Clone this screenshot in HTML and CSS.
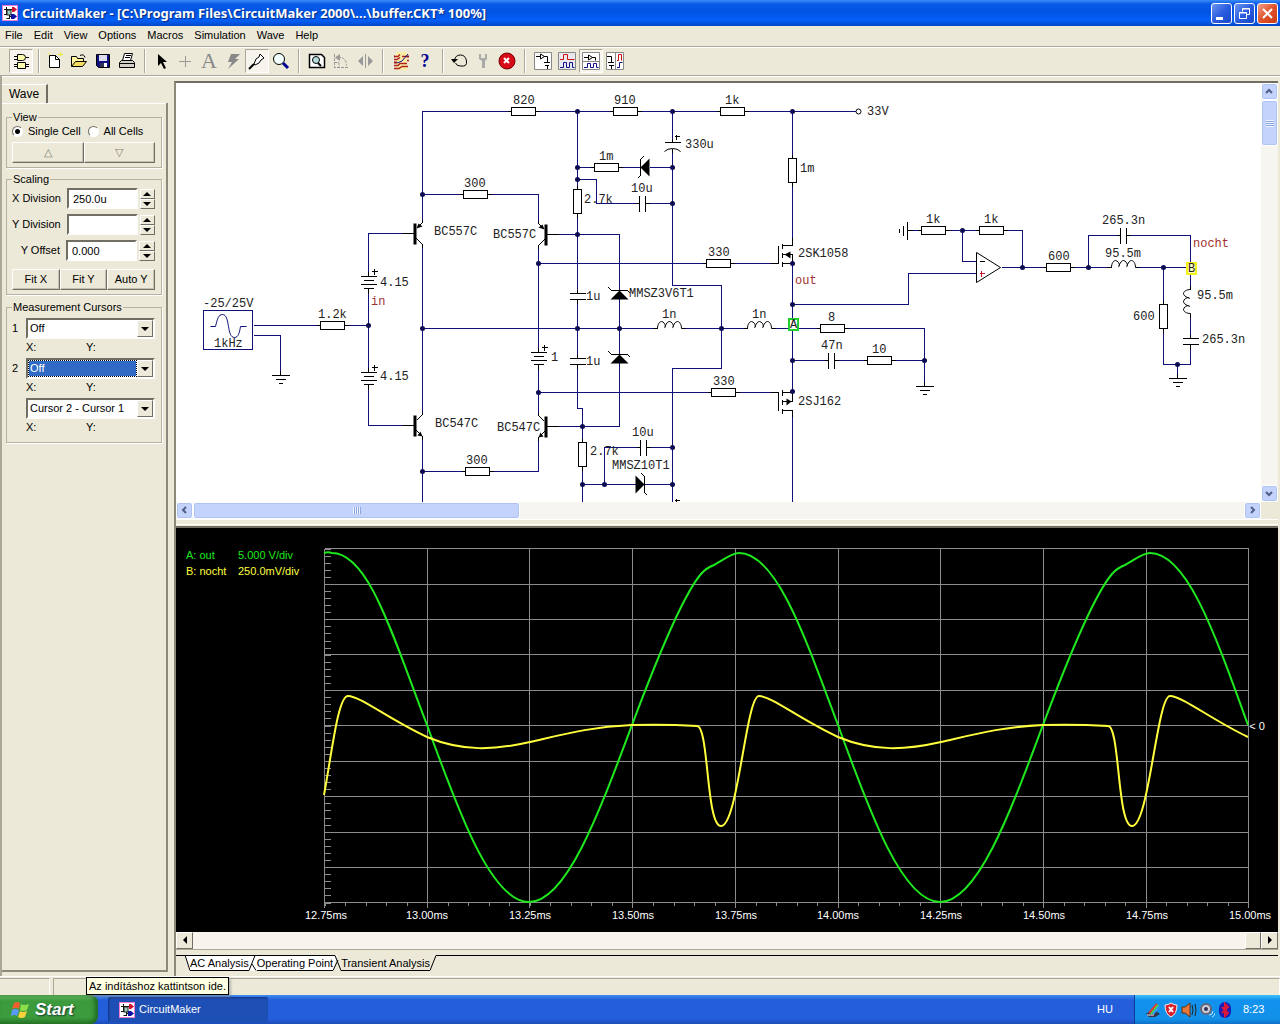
FILE: index.html
```html
<!DOCTYPE html>
<html lang="en">
<head>
    <meta charset="UTF-8">
    <meta name="viewport" content="width=device-width, initial-scale=1.0">
    <title>CircuitMaker - buffer.CKT</title>
    <link rel="stylesheet" href="styles.css">
</head>
<body>

    <svg class="defs" width="0" height="0" aria-hidden="true">
        <defs>
            <symbol id="logo" viewBox="0 0 16 16">
                <rect x=".5" y=".5" width="15" height="15" fill="#fff" stroke="#f07ad0" />
                <path d="M2 4.500H11M4.500 2V9M2 9.500H5M7.500 11.500H10M7.500 5V13.500M4.500 13.500H8" stroke="#111" fill="none" />
                <rect x="5" y="5" width="4" height="5" fill="#9fd0c0" stroke="#222" />
                <path d="M10 2h2l3 2.500-3 2.500h-2z" fill="#d01030" />
                <path d="M9 9h3l3 2.500-3 2.500h-3z" fill="#1010a0" />
            </symbol>
            <g id="res">
                <path d="M-16 0H16" class="part" />
                <rect x="-12" y="-4" width="24" height="8" class="part body" />
            </g>
            <g id="cap">
                <path d="M-7 0H-3M3 0H7M-3 -8V8M3 -8V8" class="part" />
            </g>
            <g id="coil">
                <path d="M-4 0H0C0 -4 2 -7 4 -7S8 -4 8 -2C7 0 7 -1 8 -3S10 -7 12 -7S16 -4 16 -2C15 0 15 -1 16 -3S18 -7 20 -7S24 -4 24 0H28" class="part curve" />
            </g>
            <g id="gnd">
                <path d="M0 -5V0M-9 0H9M-5 4H5M-2 8H2" class="part" />
            </g>
            <g id="bat">
                <path d="M0 -5V0M-8 0H8M-5 4H5M-8 8H8M-5 12H5M0 12V17M3 -5H9M6 -8V-2" class="part" />
            </g>
            <g id="zener">
                <path d="M-11 -3L-8 0H8L11 3" class="part" />
                <path d="M0 0L-9 9H9Z" class="solid" />
            </g>
            <g id="pnp">
                <path d="M-12 0H0M2 -5L8 -11V-14M2 5L8 11V14" class="part" />
                <rect x="-1" y="-10" width="3" height="21" class="solid" />
                <path d="M2 -5L4 -10L8 -7Z" class="solid" />
            </g>
            <g id="npn">
                <path d="M-12 0H0M2 -5L8 -11V-14M2 5L8 11V14" class="part" />
                <rect x="-1" y="-10" width="3" height="21" class="solid" />
                <path d="M8 11L3 10L6 6Z" class="solid" />
            </g>
        </defs>
    </svg>

    <header class="titlebar">
        <svg class="app-icon"><use href="#logo" /></svg>
        <h1>CircuitMaker - [C:\Program Files\CircuitMaker 2000\...\buffer.CKT* 100%]</h1>
        <div class="window-buttons">
            <button aria-label="Minimize"><svg width="19" height="19"><path d="M4 13h7v3H4z" fill="#fff" /></svg></button>
            <button aria-label="Restore"><svg width="19" height="19" fill="none" stroke="#fff"><path d="M7.500 7.500V4.500H14.500V10.500H12M7 5h8M4.500 8.500h7v6h-7zM4 9h8" /></svg></button>
            <button class="close" aria-label="Close"><svg width="19" height="19"><path d="M5 5L14 14M14 5L5 14" stroke="#fff" stroke-width="2" /></svg></button>
        </div>
    </header>

    <nav class="menubar">
        <a href="#">File</a>
        <a href="#">Edit</a>
        <a href="#">View</a>
        <a href="#">Options</a>
        <a href="#">Macros</a>
        <a href="#">Simulation</a>
        <a href="#">Wave</a>
        <a href="#">Help</a>
    </nav>

    <div class="toolbar">
        <button class="pressed" aria-label="Parts"><svg viewBox="0 0 20 20"><path d="M6.500 3.500h5q3 0 3 3t-3 3h-5zM6.500 11.500h8v6h-8z" fill="#ffffb0" stroke="#000" /><path d="M3 5.500h3M3 8.500h3M15 6.500h3M3 13.500h3M3 15.500h3M15 13.500h3M15 15.500h3" stroke="#000" /></svg></button>
        <span class="sep"></span>
        <button aria-label="New"><svg viewBox="0 0 20 20"><path d="M4.500 4.500h6l4 4v8h-10z" fill="#fff" stroke="#000" /><path d="M10.500 4v4.500h4" fill="none" stroke="#000" /><path d="M15.500 1v4M13 3.500h5M3 2l2 2" stroke="#eee83a" /></svg></button>
        <button aria-label="Open"><svg viewBox="0 0 20 20"><path d="M2.500 15.500V5.500h5l1 2h6v3" fill="#fff4a0" stroke="#000" /><path d="M2.500 15.500l4-5h11l-4 5z" fill="#f4dc60" stroke="#000" /><path d="M11 4.500q4-2 5 2" fill="none" stroke="#000" /></svg></button>
        <button aria-label="Save"><svg viewBox="0 0 20 20"><path d="M3.500 3.500h13v13h-11l-2-2z" fill="#101080" stroke="#000" /><path d="M6 4h8v6H6z" fill="#dde" /><path d="M7 12h7v4H7z" fill="#335" /><path d="M11 12h3v4h-3z" fill="#fff" /></svg></button>
        <button aria-label="Print"><svg viewBox="0 0 20 20"><path d="M5.500 9.500l2-7h8l-2 7" fill="#fff" stroke="#000" /><path d="M2.500 11.500l2-2h11l2 2v5h-15z" fill="#d4d0c8" stroke="#000" /><path d="M2 12.500h16M9 4.500h5M8 6.500h5" stroke="#000" /></svg></button>
        <span class="sep"></span>
        <button aria-label="Arrow"><svg viewBox="0 0 20 20"><path d="M7 3v12l3-3 3 6 2-1-3-6h4z" fill="#000" /></svg></button>
        <button aria-label="Wire"><svg viewBox="0 0 20 20"><path d="M4 10.500h12M10.500 5v11" stroke="#999" /></svg></button>
        <button class="letter" aria-label="Text">A</button>
        <button aria-label="Delete"><svg viewBox="0 0 20 20"><path d="M8 3h9l-5 5h4L5 18l4-7H5z" fill="#888" /></svg></button>
        <button class="pressed" aria-label="Probe"><svg viewBox="0 0 20 20"><path d="M2 18l5-5" stroke="#000" stroke-width="2" /><path d="M7 13L9 8L12 6L13 3L17 7L14 9L12 12L8 14Z" fill="#fff" stroke="#000" /></svg></button>
        <button aria-label="Zoom"><svg viewBox="0 0 20 20"><circle cx="8" cy="8" r="5.500" fill="#f4ffff" stroke="#000" /><path d="M12 12l5 5" stroke="#000090" stroke-width="3" /></svg></button>
        <span class="sep wide"></span>
        <button aria-label="Fit"><svg viewBox="0 0 20 20"><path d="M2.500 3.500h12l3 3v10h-15z" fill="#fff" stroke="#000" stroke-width="1.500" /><circle cx="9" cy="9" r="3.500" fill="#b8dcdc" stroke="#000" /><path d="M11 12l3 3" stroke="#000" stroke-width="2" /></svg></button>
        <button aria-label="Rotate"><svg viewBox="0 0 20 20"><path d="M3.500 3v13.500H17M3.500 11.500h4.500v5M7 6.500h3q5 1 5.500 8" fill="none" stroke="#999" stroke-dasharray="3 1" /><path d="M4 6.500L9 3V10Z" fill="#999" /></svg></button>
        <button aria-label="Mirror"><svg viewBox="0 0 20 20"><path d="M8 5v10l-5-5zM13 5v10l5-5z" fill="#999" /><path d="M10.500 3v14" stroke="#999" /></svg></button>
        <span class="sep wide"></span>
        <button aria-label="Netlist"><svg viewBox="0 0 20 20"><rect x="5" y="1" width="11" height="18" fill="#fbeea4" /><path d="M3 5.500h4l2-2M3 8.500h3l3-2M11 5.500h5M3 14.500h4l2-2h7M3 17.500h5l3-2h6M16 9.500h2" stroke="#b02020" stroke-width="1.500" fill="none" /><path d="M6 12l5-2 6-7" stroke="#101090" fill="none" /><path d="M3 11.500h3M3 5.500h1M16 5.500h2" stroke="#a01818" stroke-width="2" /></svg></button>
        <button class="letter help" aria-label="Help">?</button>
        <span class="sep"></span>
        <button aria-label="Reset"><svg viewBox="0 0 20 20"><path d="M5.500 9q1-5 6-5t6 6-6 5q-4 0-5-3" fill="none" stroke="#000" /><path d="M2 8h7l-4 4z" fill="#000" /></svg></button>
        <button aria-label="Tools"><svg viewBox="0 0 20 20"><path d="M6 3v5l3 2v7h3v-7l2-2V3h-2v4H8V3z" fill="#aaa" /></svg></button>
        <button aria-label="Stop"><svg viewBox="0 0 20 20"><circle cx="10" cy="10" r="8" fill="#d80c18" stroke="#700" /><path d="M7 7l5 5M12 7l-5 5" stroke="#fff" stroke-width="2" /></svg></button>
        <span class="sep wide"></span>
        <button aria-label="Schematic"><svg viewBox="0 0 20 20"><path d="M1.500 1.500h17v17h-17z" fill="#fff" stroke="#888" /><path d="M3 5.500h4M11 5.500h3.500v6M11 11.500h6M12 14.500h4M14.500 15v3M7.500 3v5l4-2.500z" stroke="#000" fill="none" /></svg></button>
        <button aria-label="Waves"><svg viewBox="0 0 20 20"><path d="M1.500 1.500h17v17h-17z" fill="#e8e8ee" stroke="#888" /><path d="M3 8.500h3.500v-5h4v5h7" stroke="#d01010" fill="none" /><path d="M3 16.500h3.500v-5h3v5h3v-5h3v5h2" stroke="#101090" fill="none" /></svg></button>
        <button class="pressed" aria-label="Split horizontal"><svg viewBox="0 0 20 20"><path d="M1.500 1.500h17v17h-17zM1.500 10.500h17" fill="#fff" stroke="#888" /><path d="M3 6.500h4M11 6.500h3.500v3M7.500 4v5l4-2.500z" stroke="#000" fill="none" /><path d="M3 16.500h3.500v-4h3v4h3v-4h3v4h2" stroke="#101090" fill="none" /></svg></button>
        <button aria-label="Split vertical"><svg viewBox="0 0 20 20"><path d="M1.500 1.500h17v17h-17zM10.500 1.500v17" fill="#fff" stroke="#888" /><path d="M2 5.500h4.500v6M3 11.500h6M4 14.500h5M6.500 15v3" stroke="#000" fill="none" /><path d="M12 9.500h1.500v-6h3v6" stroke="#d01010" fill="none" /><path d="M12 16.500h2.500v-5h3" stroke="#101090" fill="none" /></svg></button>
    </div>

    <main class="workspace">
        <aside class="sidebar">
            <button class="side-tab">Wave</button>
            <form class="side-body">
                <fieldset>
                    <legend>View</legend>
                    <div class="radios">
                        <label><input type="radio" name="cells" checked>Single Cell</label>
                        <label><input type="radio" name="cells">All Cells</label>
                    </div>
                    <div class="button-row">
                        <button type="button" class="dim" aria-label="Previous cell">△</button>
                        <button type="button" class="dim" aria-label="Next cell">▽</button>
                    </div>
                </fieldset>

                <fieldset class="scaling">
                    <legend>Scaling</legend>
                    <div class="scale-row">
                        <label for="xdiv">X Division</label>
                        <input type="text" id="xdiv" value="250.0u">
                        <div class="spin"><button type="button" aria-label="X division up"></button><button type="button" class="down" aria-label="X division down"></button></div>
                    </div>
                    <div class="scale-row">
                        <label for="ydiv">Y Division</label>
                        <input type="text" id="ydiv" value="">
                        <div class="spin"><button type="button" aria-label="Y division up"></button><button type="button" class="down" aria-label="Y division down"></button></div>
                    </div>
                    <div class="scale-row">
                        <label for="yoff">Y Offset</label>
                        <input type="text" id="yoff" value="0.000">
                        <div class="spin"><button type="button" aria-label="Y offset up"></button><button type="button" class="down" aria-label="Y offset down"></button></div>
                    </div>
                    <div class="button-row fit">
                        <button type="button">Fit X</button>
                        <button type="button">Fit Y</button>
                        <button type="button">Auto Y</button>
                    </div>
                </fieldset>

                <fieldset class="cursors">
                    <legend>Measurement Cursors</legend>
                    <label for="c1">1</label>
                    <div class="combo"><select id="c1"><option>Off</option></select><i></i></div>
                    <p><span>X:</span><span>Y:</span></p>
                    <label for="c2">2</label>
                    <div class="combo active"><select id="c2"><option>Off</option></select><i></i></div>
                    <p><span>X:</span><span>Y:</span></p>
                    <div class="combo"><select aria-label="Cursor difference"><option>Cursor 2 - Cursor 1</option></select><i></i></div>
                    <p><span>X:</span><span>Y:</span></p>
                </fieldset>
            </form>
        </aside>

        <section class="panes">
            <div class="schematic">
                <svg class="canvas" viewBox="176 83 1085 419" preserveAspectRatio="xMinYMin slice">
                    <!-- wires -->
                    <g class="wires" transform="translate(.5 .5)">
                        <path d="M422 222V111H855M422 194H538V222M422 245V412M422 436V502M422 471H538V440" />
                        <path d="M413 233H368V276M368 288V372M368 384V425H413M253 325H368M253 335H280V375" />
                        <path d="M577 111V293M577 299V358M577 364V408H582V502M577 167H641M649 167H672" />
                        <path d="M672 111V142M672 148V285H721V368H672V502" />
                        <path d="M577 179H596V203H639M645 203H672M549 234H619V426H549" />
                        <path d="M538 246V352M538 364V414M538 263H775M538 392H775" />
                        <path d="M422 328H657M681 328H747M771 328H924V386" />
                        <path d="M640 447H604V484M646 447H672M582 484H672" />
                        <path d="M792 111V245M792 263V390M792 412V502M792 360H828M834 360H924" />
                        <path d="M792 304H908V273H976M911 230H1022V267M962 230V261H976M1001 267H1111M1135 267H1190" />
                        <path d="M1088 267V235H1120M1126 235H1190V289M1190 313V338M1190 344V364H1163V267M1177 364V378" />
                        <rect x="203" y="310" width="49" height="39" />
                        <path class="curve" d="M210 326H215C217 318 218 314 222 314S227 320 228 326S230 337 234 337S239 332 240 326H246" />
                    </g>
                    <!-- parts -->
                    <g transform="translate(.5 .5)">
                        <use href="#res" x="523" y="111" />
                        <use href="#res" x="625" y="111" />
                        <use href="#res" x="732" y="111" />
                        <use href="#res" x="606" y="167" />
                        <use href="#res" x="475" y="194" />
                        <use href="#res" x="718" y="263" />
                        <use href="#res" x="332" y="325" />
                        <use href="#res" x="477" y="471" />
                        <use href="#res" x="723" y="392" />
                        <use href="#res" x="832" y="328" />
                        <use href="#res" x="879" y="360" />
                        <use href="#res" x="933" y="230" />
                        <use href="#res" x="991" y="230" />
                        <use href="#res" x="1058" y="267" />
                        <use href="#res" transform="translate(577 201) rotate(90)" />
                        <use href="#res" transform="translate(582 454) rotate(90)" />
                        <use href="#res" transform="translate(792 170) rotate(90)" />
                        <use href="#res" transform="translate(1163 316) rotate(90)" />
                        <use href="#cap" x="642" y="203" />
                        <use href="#cap" x="643" y="447" />
                        <use href="#cap" x="831" y="360" />
                        <use href="#cap" x="1123" y="235" />
                        <use href="#cap" transform="translate(577 296) rotate(90)" />
                        <use href="#cap" transform="translate(577 361) rotate(90)" />
                        <use href="#cap" transform="translate(1190 341) rotate(90)" />
                        <path class="part" d="M672 138V142M664 142H680M672 148V152M674 136H679M676 134V139M674 500H679M676 498V502" />
                        <path class="part curve" d="M664 151Q667 148 672 148T680 151" />
                        <use href="#coil" x="657" y="328" />
                        <use href="#coil" x="747" y="328" />
                        <use href="#coil" x="1111" y="267" />
                        <use href="#coil" transform="translate(1190 313) rotate(-90)" />
                        <use href="#gnd" x="280" y="375" />
                        <use href="#gnd" x="924" y="386" />
                        <use href="#gnd" x="1177" y="378" />
                        <use href="#gnd" transform="translate(907 230) rotate(90)" />
                        <use href="#bat" x="368" y="276" />
                        <use href="#bat" x="368" y="372" />
                        <use href="#bat" x="538" y="352" />
                        <use href="#zener" x="619" y="290" />
                        <use href="#zener" x="619" y="354" />
                        <use href="#zener" transform="translate(640 167) rotate(-90)" />
                        <use href="#zener" transform="translate(644 484) scale(-1 1) rotate(-90)" />
                        <use href="#pnp" x="414" y="233" />
                        <use href="#npn" x="414" y="425" />
                        <use href="#pnp" transform="translate(546 234) scale(-1 1)" />
                        <use href="#npn" transform="translate(546 426) scale(-1 1)" />
                        <!-- mosfets -->
                        <path class="part" d="M770 263H778V245M782 243V248M782 252V257M782 261V266M782 245H792V237M782 254H792V263H782" />
                        <path class="solid" d="M784 254L790 251V258Z" />
                        <path class="part" d="M770 392H778V410M782 389V395M782 399V404M782 408V413M782 392H792V401H782M782 410H792V416" />
                        <path class="solid" d="M791 401L786 398V405Z" />
                        <!-- op amp -->
                        <path class="part curve" d="M976 252L1000 267L976 282Z" />
                        <path class="part" d="M979 261H984" />
                        <path class="plus" d="M979 273H984M981 270V276" />
                        <circle class="terminal" cx="858" cy="111" r="2.500" />
                    </g>
                    <g class="dots" transform="translate(.5 .5)">
                        <path d="M577 111h0M672 111h0M792 111h0M577 167h0M577 179h0M672 167h0M672 203h0M577 234h0M538 263h0M422 194h0M368 325h0M422 328h0M422 471h0M577 328h0M619 328h0M721 328h0M538 392h0M582 426h0M582 484h0M604 484h0M672 447h0M672 484h0M792 304h0M792 360h0M924 360h0M962 230h0M1022 267h0M1088 267h0M1163 267h0M1177 364h0M792 263h0M792 391h0" />
                    </g>
                    <g class="labels">
                        <text x="513" y="104">820</text>
                        <text x="614" y="104">910</text>
                        <text x="725" y="104">1k</text>
                        <text x="867" y="115">33V</text>
                        <text x="685" y="148">330u</text>
                        <text x="599" y="160">1m</text>
                        <text x="631" y="192">10u</text>
                        <text x="584" y="203">2.7k</text>
                        <text x="464" y="187">300</text>
                        <text x="434" y="235">BC557C</text>
                        <text x="493" y="238">BC557C</text>
                        <text x="708" y="256">330</text>
                        <text x="800" y="172">1m</text>
                        <text x="798" y="257">2SK1058</text>
                        <text x="629" y="297">MMSZ3V6T1</text>
                        <text x="586" y="300">1u</text>
                        <text x="586" y="365">1u</text>
                        <text x="662" y="318">1n</text>
                        <text x="752" y="318">1n</text>
                        <text x="551" y="361">1</text>
                        <text x="713" y="385">330</text>
                        <text x="435" y="427">BC547C</text>
                        <text x="497" y="431">BC547C</text>
                        <text x="632" y="436">10u</text>
                        <text x="590" y="455">2.7k</text>
                        <text x="612" y="469">MMSZ10T1</text>
                        <text x="466" y="464">300</text>
                        <text x="380" y="286">4.15</text>
                        <text x="380" y="380">4.15</text>
                        <text x="318" y="318">1.2k</text>
                        <text x="203" y="307">-25/25V</text>
                        <text x="214" y="347">1kHz</text>
                        <text x="798" y="405">2SJ162</text>
                        <text x="828" y="321">8</text>
                        <text x="821" y="349">47n</text>
                        <text x="872" y="353">10</text>
                        <text x="926" y="223">1k</text>
                        <text x="984" y="223">1k</text>
                        <text x="1048" y="260">600</text>
                        <text x="1102" y="224">265.3n</text>
                        <text x="1105" y="257">95.5m</text>
                        <text x="1197" y="299">95.5m</text>
                        <text x="1133" y="320">600</text>
                        <text x="1202" y="343">265.3n</text>
                        <text class="net" x="1193" y="247">nocht</text>
                        <text class="net" x="371" y="305">in</text>
                        <text class="net" x="795" y="284">out</text>
                    </g>
                    <!-- probes -->
                    <rect x="789" y="319" width="9" height="11" fill="#fff" stroke="#1fd02f" stroke-width="2" />
                    <rect x="1187" y="263" width="9" height="11" fill="#ffffc0" stroke="#f4f01c" stroke-width="2" />
                    <g class="labels">
                        <text x="790" y="328">A</text>
                        <text x="1188" y="272">B</text>
                    </g>
                </svg>
                <div class="xp-scroll vertical">
                    <button aria-label="Scroll up"><svg width="9" height="9"><path d="M1 6L4 3L7 6" /></svg></button>
                    <div class="thumb"></div>
                    <button class="end" aria-label="Scroll down"><svg width="9" height="9"><path d="M1 3L4 6L7 3" /></svg></button>
                </div>
                <div class="xp-scroll horizontal">
                    <button aria-label="Scroll left"><svg width="9" height="9"><path d="M6 1L3 4L6 7" /></svg></button>
                    <div class="thumb"></div>
                    <button class="end" aria-label="Scroll right"><svg width="9" height="9"><path d="M3 1L6 4L3 7" /></svg></button>
                </div>
            </div>

            <div class="splitter"></div>

            <div class="plot">
                <svg viewBox="176 528 1102 404" preserveAspectRatio="xMinYMin meet">
                    <g class="grid" transform="translate(.5 .5)">
                        <path d="M324 548V907M427 548V907M529 548V907M632 548V907M735 548V907M838 548V907M940 548V907M1043 548V907M1146 548V907M1248 548V907" />
                        <path d="M324 548H1248M324 584H1248M324 619H1248M324 654H1248M324 690H1248M324 725H1248M324 761H1248M324 796H1248M324 832H1248M324 867H1248M324 902H1248" />
                        <path class="ticks-y" d="M327 548V903" />
                        <path class="ticks-x" d="M324 904H1249" />
                    </g>
                    <path class="trace-a" d="M324 553C327 552 329 552 332 553C369 553 393 637 427 725C460 816 492 902 529 902C566 902 598 816 632 725C656 661 683 595 701 574Q706 568 714 565C722 561 731 553 739 553C776 553 804 634 838 725C871 816 903 902 940 902C977 902 1009 816 1043 725C1067 661 1094 595 1112 574Q1117 568 1125 565C1133 561 1142 553 1150 553C1187 553 1215 634 1248 725" />
                    <path class="trace-b" d="M324 795C332 752 338 696 348 696C360 696 390 720 427 737C463 752 495 750 530 742C565 734 590 727 632 725Q665 724 697 726C709 726 706 826 721 826C738 826 746 696 759 696C771 696 801 720 838 737C874 752 906 750 941 742C976 734 1001 727 1043 725Q1076 724 1108 726C1120 726 1117 826 1132 826C1149 826 1157 696 1170 696C1182 696 1212 720 1248 737" />
                    <g class="axis">
                        <text x="326" y="919">12.75ms</text>
                        <text x="427" y="919">13.00ms</text>
                        <text x="530" y="919">13.25ms</text>
                        <text x="633" y="919">13.50ms</text>
                        <text x="736" y="919">13.75ms</text>
                        <text x="838" y="919">14.00ms</text>
                        <text x="941" y="919">14.25ms</text>
                        <text x="1044" y="919">14.50ms</text>
                        <text x="1147" y="919">14.75ms</text>
                        <text x="1250" y="919">15.00ms</text>
                        <text x="1257" y="730">&lt; 0</text>
                    </g>
                    <g class="legend-a">
                        <text x="186" y="559">A: out</text>
                        <text x="238" y="559">5.000 V/div</text>
                    </g>
                    <g class="legend-b">
                        <text x="186" y="575">B: nocht</text>
                        <text x="238" y="575">250.0mV/div</text>
                    </g>
                </svg>
            </div>

            <div class="classic-scroll">
                <button aria-label="Scroll left"><svg width="6" height="8"><path d="M5 0V8L1 4Z" /></svg></button>
                <span class="track"></span>
                <span class="grip"></span>
                <button aria-label="Scroll right"><svg width="6" height="8"><path d="M1 0V8L5 4Z" /></svg></button>
            </div>

            <div class="analysis-tabs">
                <span class="lead"></span>
                <svg width="5" height="16"><path d="M0 0H5V15Z" fill="#fff" stroke="none" /><path d="M0 .5H5M0 0L5 15.500" /></svg>
                <button>AC Analysis</button>
                <svg width="8" height="16"><path d="M0 0H8V16H0Z" fill="#fff" stroke="none" /><path d="M0 15.500L6 .5H0M6 .5H8M3 9L7 15.500" /></svg>
                <button>Operating Point</button>
                <svg width="8" height="16"><path d="M0 0H4L0 15Z" fill="#fff" stroke="none" /><path d="M0 15.500L5 5M0 .5H2L8 15.500" /></svg>
                <button class="current">Transient Analysis</button>
                <svg width="8" height="16"><path d="M0 15.500L6 .5H8" /></svg>
                <span class="rest"></span>
            </div>
        </section>
    </main>

    <div class="statusbar">
        <span class="cell"></span>
        <span class="cell grow"></span>
        <div class="tooltip" role="tooltip">Az indításhoz kattintson ide.</div>
    </div>

    <footer class="taskbar">
        <button class="start">
            <svg width="18" height="18" viewBox="0 0 18 18">
                <path d="M3 2Q6 0 9 2L8 8Q5 6 1 8Z" fill="#f0602c" />
                <path d="M10 3Q13 5 18 3L16 9Q12 11 9 9Z" fill="#8ee04a" />
                <path d="M1 9Q4 7 8 9L6 15Q3 13 0 15Z" fill="#5a9af8" />
                <path d="M9 10Q12 12 16 10L14 16Q10 18 7 16Z" fill="#fcd23c" />
            </svg>
            Start
        </button>
        <button class="task"><svg class="app-icon"><use href="#logo" /></svg>CircuitMaker</button>
        <span class="lang">HU</span>
        <div class="tray">
            <svg width="16" height="16"><path d="M1 12L8 7L15 12L10 15H4Z" fill="#334" /><path d="M4 11L12 2" stroke="#e33" stroke-width="2" /><path d="M6 12L13 3" stroke="#4d4" stroke-width="2" /><path d="M8 12L14 5" stroke="#39f" stroke-width="2" /><path d="M2 13L9 13" stroke="#eee" /></svg>
            <svg width="16" height="16"><path d="M8 1Q11 3 14 3Q14 12 8 15Q2 12 2 3Q5 3 8 1Z" fill="#d8202c" stroke="#eee" /><path d="M6 5L10 10M10 5L6 10" stroke="#fff" stroke-width="2" /></svg>
            <svg width="16" height="16"><path d="M1 5H4L9 1V15L4 11H1Z" fill="#e8763a" stroke="#531" /><path d="M11 3Q13 8 11 13M14 2Q16 8 14 14" fill="none" stroke="#222" /></svg>
            <svg width="16" height="16"><circle cx="7" cy="7" r="5" fill="#ccd" stroke="#667" stroke-width="2" /><circle cx="7" cy="7" r="2" fill="#335" /><path d="M10 13Q14 13 14 9M13 15Q16 14 16 11" fill="none" stroke="#bde" /></svg>
            <svg width="16" height="16"><rect x="2" y="0" width="12" height="16" rx="6" fill="#1620b8" /><path d="M5 5L11 11L8 14V2L11 5L5 11" fill="none" stroke="#e01838" stroke-width="2" /></svg>
            <time>8:23</time>
        </div>
    </footer>

</body>
</html>
```
FILE: styles.css
```css
* {
    box-sizing: border-box;
}
body {
    margin: 0;
    min-height: 100vh;
    display: flex;
    flex-direction: column;
    background: #ece9d8;
    color: #000;
    font: 11px/13px "Liberation Sans", Arial, sans-serif;
}
button, input, select {
    font: inherit;
    color: inherit;
    margin: 0;
    padding: 0;
    border: 0;
    border-radius: 0;
    background: none;
}
.defs {
    position: absolute;
}
.app-icon {
    width: 16px;
    height: 16px;
    flex: none;
}

/* Title bar */
.titlebar {
    display: flex;
    align-items: center;
    height: 26px;
    padding: 0 2px;
    background: linear-gradient(#3a8cf8, #0a5ae8 4px, #0054e3 12px, #0560f8 20px, #0048c8);
    color: #fff;
}
.titlebar h1 {
    flex: 1;
    margin: 0 0 0 4px;
    font: bold 13px/18px "Noto Sans", "Open Sans", sans-serif;
    text-shadow: 1px 1px 1px #0a2a80;
    white-space: nowrap;
}
.window-buttons {
    display: flex;
    gap: 2px;
}
.window-buttons button {
    width: 21px;
    height: 21px;
    border: 1px solid #fff;
    border-radius: 3px;
    background: linear-gradient(135deg, #6d96f0, #2a5ce0 50%, #1a48c8);
}
.window-buttons svg {
    display: block;
}
.window-buttons .close {
    background: linear-gradient(135deg, #f0a088, #e0532c 50%, #c83c14);
}

/* Menu and toolbar */
.menubar {
    display: flex;
    height: 20px;
}
.menubar a {
    padding: 3px 6px 3px 5px;
    color: #000;
    text-decoration: none;
}
.toolbar {
    display: flex;
    align-items: center;
    height: 30px;
    padding-left: 9px;
    border-top: 1px solid #aca899;
    border-bottom: 1px solid #aca899;
    box-shadow: inset 0 1px #fff, 0 1px #fff;
}
.toolbar button {
    display: flex;
    align-items: center;
    justify-content: center;
    width: 24px;
    height: 24px;
}
.toolbar svg {
    flex: none;
    width: 20px;
    height: 20px;
}
.toolbar .pressed {
    border: 1px solid;
    border-color: #aca899 #fff #fff #aca899;
    background: #f6f4ec;
}
.toolbar .letter {
    font: 22px/24px "Liberation Serif", serif;
    color: #888;
}
.toolbar .help {
    font-size: 18px;
    font-weight: bold;
    color: #000090;
}
.sep {
    width: 2px;
    height: 24px;
    margin: 0 3px 0 5px;
    border-left: 1px solid #aca899;
    border-right: 1px solid #fff;
}
.sep.wide {
    margin: 0 5px;
}

/* Workspace */
.workspace {
    flex: 1;
    display: flex;
    min-height: 0;
}
.sidebar {
    width: 168px;
    flex: none;
    display: flex;
    flex-direction: column;
    align-items: flex-start;
    padding-top: 8px;
    border-left: 2px solid #aca899;
}
.side-tab {
    height: 19px;
    width: 46px;
    border-top: 1px solid #fff;
    border-right: 2px solid #716f64;
    font-size: 12px;
}
.side-body {
    flex: 1;
    width: 100%;
    margin-bottom: 4px;
    padding: 8px 4px 0;
    border-right: 2px solid #8d8a7c;
    border-bottom: 2px solid #8d8a7c;
    box-shadow: inset 0 1px #fff;
}
fieldset {
    margin: 0 0 5px;
    padding: 0 6px 4px 5px;
    min-width: 0;
    border: 1px solid #b5b2a2;
    box-shadow: 1px 1px #fff;
}
legend {
    height: 13px;
    padding: 0 1px;
}
.radios {
    display: flex;
    gap: 7px;
    height: 18px;
    white-space: nowrap;
}
.radios label {
    display: flex;
    align-items: center;
    height: 14px;
}
.radios input {
    appearance: none;
    width: 11px;
    height: 11px;
    margin-right: 5px;
    border: 1px solid;
    border-color: #716f64 #fff #fff #716f64;
    border-radius: 50%;
    background: #fff;
}
.radios input:checked {
    background: radial-gradient(#000 2px, #fff 3px);
}
.button-row {
    display: flex;
}
.button-row button {
    flex: 1;
    height: 21px;
    border: 1px solid;
    border-color: #fff #716f64 #716f64 #fff;
    box-shadow: inset -1px -1px #c5c2b4;
}
.button-row .dim {
    color: #807d70;
}
.scaling {
    padding-bottom: 4px;
    margin-bottom: 6px;
}
.scale-row {
    display: flex;
    align-items: center;
    height: 21px;
    margin: 0 0 5px;
}
.scale-row:nth-of-type(1) {
    margin-top: 2px;
}
.scale-row label {
    flex: 1;
    padding-right: 6px;
    text-align: right;
    white-space: nowrap;
}
.scale-row input {
    width: 71px;
    height: 21px;
    padding: 0 4px;
    border: 2px solid;
    border-color: #716f64 #fff #fff #716f64;
    background: #fff;
}
.spin {
    width: 16px;
    height: 20px;
    margin-left: 2px;
    display: flex;
    flex-direction: column;
}
.spin button {
    flex: 1;
    display: flex;
    align-items: center;
    justify-content: center;
    border: 1px solid;
    border-color: #fff #716f64 #716f64 #fff;
}
.spin button::before {
    content: "";
    border: 4px solid transparent;
    border-top: 0;
    border-bottom: 4px solid #000;
}
.spin .down::before {
    border-top: 4px solid #000;
    border-bottom: 0;
}
.fit {
    margin-top: 8px;
}
.cursors {
    display: grid;
    grid-template-columns: 14px 1fr;
    align-items: center;
    padding-top: 4px;
}
.cursors label {
    grid-column: 1;
}
.cursors .combo, .cursors p {
    grid-column: 2;
}
.cursors p {
    display: flex;
    height: 19px;
    margin: 0;
    padding-top: 2px;
}
.cursors p span {
    width: 60px;
}
.combo {
    display: flex;
    height: 21px;
    min-width: 0;
    border: 2px solid;
    border-color: #716f64 #fff #fff #716f64;
    background: #fff;
}
.combo select {
    appearance: none;
    flex: 1;
    min-width: 0;
    padding: 0 2px;
}
.combo.active select {
    margin: 1px;
    padding: 0 1px;
    background: #316ac5;
    color: #fff;
    outline: 1px dotted #000;
}
.combo i {
    width: 16px;
    display: flex;
    align-items: center;
    justify-content: center;
    border: 1px solid;
    border-color: #fff #716f64 #716f64 #fff;
    background: #ece9d8;
}
.combo i::before {
    content: "";
    border: 4px solid transparent;
    border-top-color: #000;
    border-bottom: 0;
}

/* Right side */
.panes {
    flex: 1;
    min-width: 0;
    display: flex;
    flex-direction: column;
    margin: 5px 2px 0 6px;
    border-left: 2px solid #8d8a7c;
    border-top: 2px solid #716f64;
}
.schematic {
    flex: 436 1 0;
    min-height: 0;
    display: grid;
    grid-template: minmax(0, 1fr) 17px / minmax(0, 1fr) 17px;
}
.canvas {
    display: block;
    width: 100%;
    height: 100%;
    background: #fff;
}
.wires, .part, .terminal, .plus {
    fill: none;
    stroke: #000;
    shape-rendering: crispEdges;
}
.wires {
    stroke: #10107a;
}
.body, .terminal {
    fill: #fff;
}
.curve, .terminal {
    shape-rendering: auto;
}
.plus {
    stroke: #d01020;
}
.dots {
    fill: none;
    stroke: #0c0c50;
    stroke-width: 5px;
    stroke-linecap: round;
}
.labels {
    font: 12px "Liberation Mono", monospace;
    fill: #222;
}
.labels .net {
    fill: #a03030;
}
.xp-scroll {
    display: flex;
    background: #f6f5f0;
}
.vertical {
    flex-direction: column;
}
.xp-scroll button, .thumb {
    border: 1px solid #fff;
    border-radius: 3px;
    background: #c3d3fc;
    box-shadow: inset 0 0 0 1px #b0c4f4;
}
.xp-scroll button {
    display: flex;
    align-items: center;
    justify-content: center;
    width: 17px;
    height: 17px;
}
.xp-scroll path {
    fill: none;
    stroke: #4d6185;
    stroke-width: 2;
}
.xp-scroll .end {
    margin: auto 0 0 auto;
}
.thumb {
    display: flex;
    align-items: center;
    justify-content: center;
}
.vertical .thumb {
    height: 46px;
}
.horizontal .thumb {
    width: 327px;
}
.thumb::before {
    content: "";
    width: 8px;
    height: 7px;
    background: repeating-linear-gradient(90deg, #eef4fe 0 1px, #8ca6e0 1px 2px);
}
.vertical .thumb::before {
    background: repeating-linear-gradient(#eef4fe 0 1px, #8ca6e0 1px 2px);
}
.splitter {
    height: 9px;
    border-top: 1px solid #fff;
    border-bottom: 2px solid #716f64;
    background: linear-gradient(#ece9d8 4px, #fff 4px, #fff 5px, #ece9d8 5px);
}
.plot {
    flex: 404 1 0;
    min-height: 0;
    background: #000;
}
.plot svg {
    display: block;
    width: 100%;
    height: 100%;
}
.grid {
    fill: none;
    stroke: #8c8c8c;
    shape-rendering: crispEdges;
}
.ticks-y {
    stroke-width: 6px;
    stroke-dasharray: 1 6.08;
}
.ticks-x {
    stroke-width: 3px;
    stroke-dasharray: 1 19.53;
}
.trace-a, .trace-b {
    fill: none;
    stroke: #1ee81e;
    stroke-width: 2px;
}
.trace-b {
    stroke: #ffff3c;
}
.axis {
    fill: #fff;
    text-anchor: middle;
}
.legend-a {
    fill: #1ee81e;
}
.legend-b {
    fill: #ffff3c;
}
.classic-scroll {
    display: flex;
    height: 18px;
    border-bottom: 1px solid #aca899;
}
.classic-scroll button, .grip {
    width: 17px;
    border: 1px solid;
    border-color: #fff #716f64 #716f64 #fff;
    background: #ece9d8;
}
.grip {
    width: 16px;
}
.track {
    flex: 1;
    background: #f6f4ec;
}
.analysis-tabs {
    display: flex;
    height: 21px;
    margin: 5px 0 0;
}
.analysis-tabs svg {
    flex: none;
    fill: none;
    stroke: #000;
}
.analysis-tabs button {
    height: 16px;
    border-top: 1px solid #000;
    border-bottom: 1px solid #000;
    background: #fff;
    line-height: 14px;
    white-space: nowrap;
}
.analysis-tabs .current {
    border-top-color: transparent;
    background: none;
}
.lead, .rest {
    width: 9px;
    border-top: 1px solid #000;
}
.rest {
    flex: 1;
}

/* Bottom */
.statusbar {
    position: relative;
    display: flex;
    gap: 3px;
    height: 19px;
    padding-top: 1px;
    border-top: 1px solid #fff;
}
.cell {
    width: 50px;
    border-top: 1px solid #aca899;
    border-right: 1px solid #fff;
}
.cell + .cell {
    border-left: 1px solid #aca899;
}
.grow {
    flex: 1;
}
.tooltip {
    position: absolute;
    left: 86px;
    top: 0;
    padding: 1px 2px;
    border: 1px solid #000;
    background: #ffffe1;
    box-shadow: 2px 2px 2px #8888;
    line-height: 14px;
    white-space: nowrap;
}
.taskbar {
    display: flex;
    align-items: stretch;
    height: 29px;
    background: linear-gradient(#3f8cf0, #245edb 5px, #245edb 24px, #1c4cb8);
    color: #fff;
}
.start {
    display: flex;
    align-items: center;
    gap: 6px;
    width: 98px;
    padding-left: 11px;
    border-radius: 0 8px 8px 0;
    background: linear-gradient(#6cc06c, #3c9a3c 6px, #3c9c3c 22px, #2a7a2a);
    box-shadow: inset -3px 0 4px #1f6a1f;
    font: italic bold 17px "Liberation Sans", sans-serif;
    text-shadow: 1px 1px 2px #133;
}
.task {
    display: flex;
    align-items: center;
    gap: 4px;
    width: 160px;
    margin: 2px 0 2px 10px;
    padding-left: 11px;
    border-radius: 2px;
    background: #1e4fb5;
    box-shadow: inset 1px 1px 2px #123680;
}
.lang {
    margin-left: auto;
    padding: 8px 21px 0 0;
}
.tray {
    display: flex;
    align-items: center;
    gap: 2px;
    width: 146px;
    padding-left: 10px;
    border-left: 1px solid #0c3c90;
    background: linear-gradient(#3cc0fa, #1292ee 5px, #1290ea 24px, #0f70c8);
}
.tray time {
    margin-left: 8px;
}
```
